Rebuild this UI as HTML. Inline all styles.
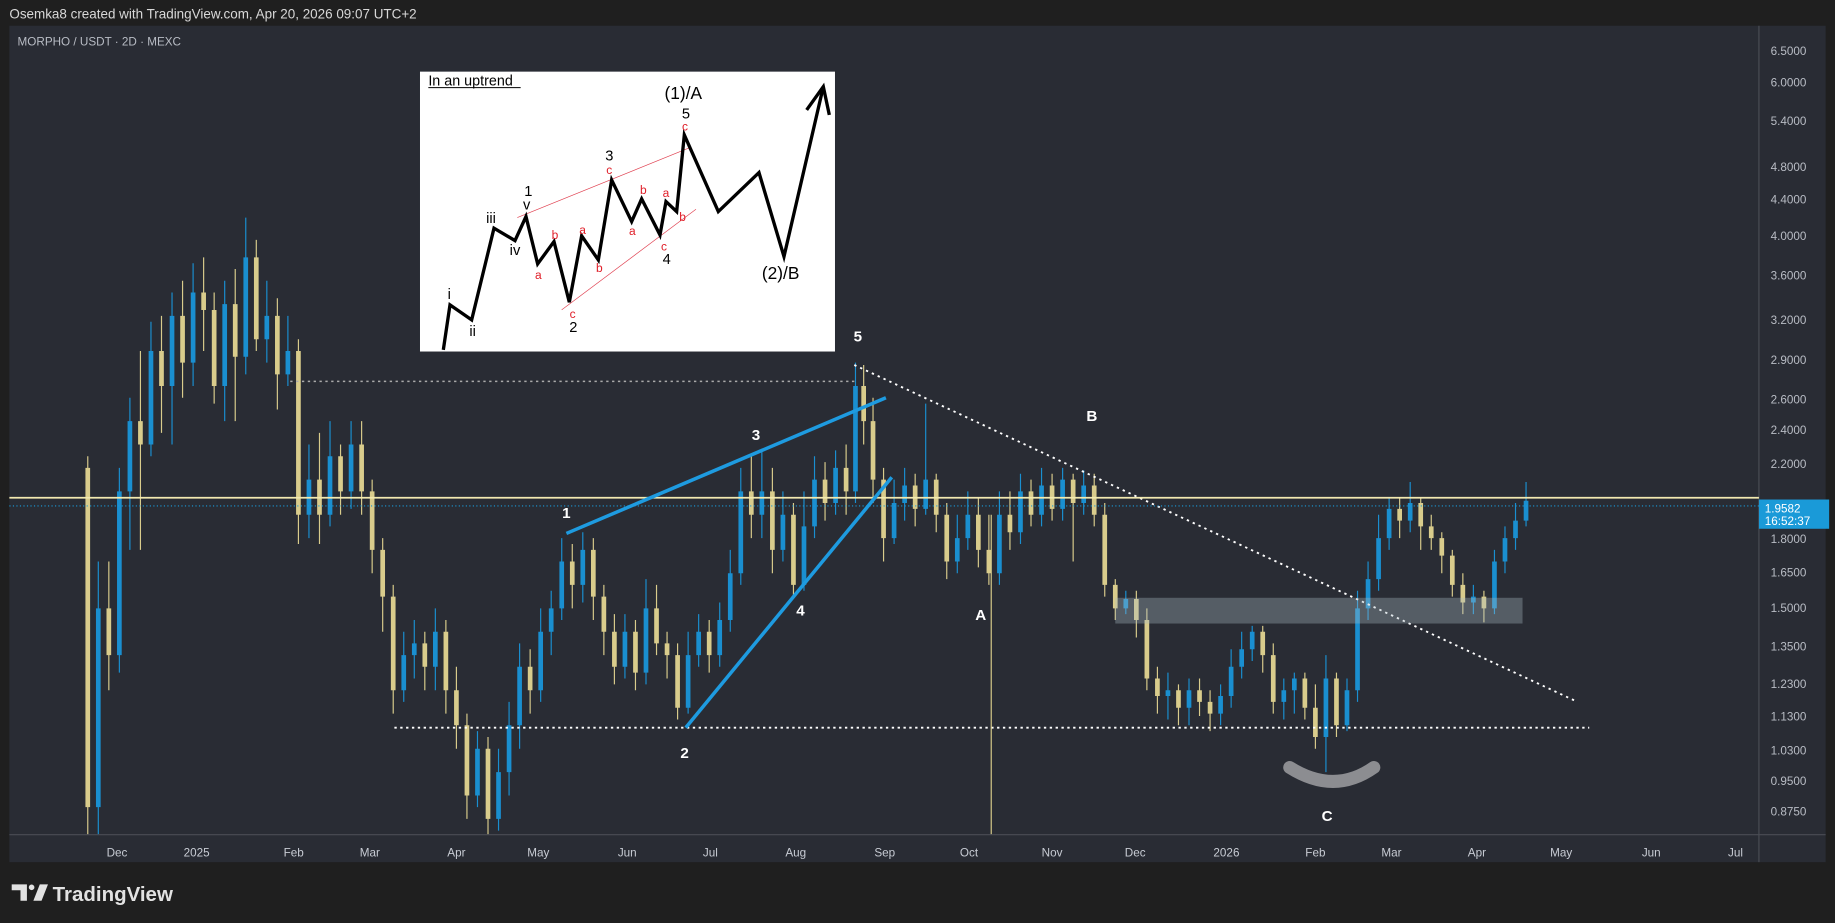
<!DOCTYPE html>
<html><head><meta charset="utf-8">
<style>
html,body{margin:0;padding:0;background:#1f1f1f;overflow:hidden}
svg{display:block}
text{font-family:"Liberation Sans","DejaVu Sans",sans-serif}
</style></head>
<body>
<svg width="1835" height="923" viewBox="0 0 1568 789" preserveAspectRatio="none" xmlns="http://www.w3.org/2000/svg">
<rect x="0" y="0" width="1568" height="789" fill="#1f1f1f"/>
<text x="8" y="16" fill="#d8d8d8" font-size="11.5">Osemka8 created with TradingView.com, Apr 20, 2026 09:07 UTC+2</text>
<rect x="8" y="22" width="1552" height="715" fill="#292c34"/>
<line x1="1503" y1="22" x2="1503" y2="737" stroke="#4a4d55" stroke-width="1"/>
<line x1="8" y1="713.5" x2="1560" y2="713.5" stroke="#4a4d55" stroke-width="1"/>
<text x="15" y="39" fill="#b8bcc4" font-size="10">MORPHO / USDT · 2D · MEXC</text>
<g fill="#b8bcc4" font-size="10" font-family="DejaVu Sans Mono, monospace">
<text x="1513" y="47">6.5000</text><text x="1513" y="74">6.0000</text><text x="1513" y="107">5.4000</text>
<text x="1513" y="146">4.8000</text><text x="1513" y="174">4.4000</text><text x="1513" y="205">4.0000</text>
<text x="1513" y="239">3.6000</text><text x="1513" y="277">3.2000</text><text x="1513" y="311">2.9000</text>
<text x="1513" y="345">2.6000</text><text x="1513" y="371">2.4000</text><text x="1513" y="400">2.2000</text>
<text x="1513" y="464">1.8000</text><text x="1513" y="493">1.6500</text><text x="1513" y="523">1.5000</text>
<text x="1513" y="556">1.3500</text><text x="1513" y="588">1.2300</text><text x="1513" y="616">1.1300</text>
<text x="1513" y="645">1.0300</text><text x="1513" y="671">0.9500</text><text x="1513" y="697">0.8750</text>
</g>
<g fill="#c8ccd4" font-size="10" text-anchor="middle">
<text x="100" y="732">Dec</text><text x="168" y="732">2025</text><text x="251" y="732">Feb</text><text x="316" y="732">Mar</text>
<text x="390" y="732">Apr</text><text x="460" y="732">May</text><text x="536" y="732">Jun</text><text x="607" y="732">Jul</text>
<text x="680" y="732">Aug</text><text x="756" y="732">Sep</text><text x="828" y="732">Oct</text><text x="899" y="732">Nov</text>
<text x="970" y="732">Dec</text><text x="1048" y="732">2026</text><text x="1124" y="732">Feb</text><text x="1189" y="732">Mar</text>
<text x="1262" y="732">Apr</text><text x="1334" y="732">May</text><text x="1411" y="732">Jun</text><text x="1483" y="732">Jul</text>
</g>
<!-- yellow candles -->
<path stroke="#d9cc8c" stroke-width="1" fill="none" d="M75 390V713M93 480V590M120 300V470M138 270V370M156 240V340M174 220V300M183 250V345M201 230V360M219 205V300M237 255V350M255 290V465M273 370V465M291 380V440M309 360V440M318 410V490M327 460V540M336 500V610M363 540V590M381 530V610M390 570V640M399 610V700M417 630V713M453 555V610M489 465V520M507 460V530M516 500V560M525 525V585M543 530V590M561 500V560M570 540V580M579 550V615M606 530V575M642 390V460M660 400V490M678 430V510M705 395V445M723 380V440M738 312V380M746 340V430M755 400V480M782 405V450M800 405V455M809 430V495M836 425V485M845 440V500M863 420V470M881 410V450M899 405V445M917 405V480M935 405V450M944 430V510M953 495V530M971 505V545M980 520V590M989 570V610M1007 585V620M1025 580V612M1034 590V625M1079 535V575M1088 550V610M1115 575V615M1124 585V640M1142 575V630M1196 425V460M1214 425V470M1223 440V470M1232 455V490M1241 470V510M1250 490V525M1268 505V532"/>
<path fill="#d9cc8c" d="M73 400h4V690h-4zM91 520h4V560h-4zM118 360h4V380h-4zM136 300h4V330h-4zM154 270h4V310h-4zM172 250h4V265h-4zM181 265h4V330h-4zM199 260h4V305h-4zM217 220h4V290h-4zM235 270h4V320h-4zM253 300h4V440h-4zM271 410h4V440h-4zM289 390h4V420h-4zM307 380h4V420h-4zM316 420h4V470h-4zM325 470h4V510h-4zM334 510h4V590h-4zM361 550h4V570h-4zM379 540h4V590h-4zM388 590h4V620h-4zM397 620h4V680h-4zM415 640h4V700h-4zM451 570h4V590h-4zM487 480h4V500h-4zM505 470h4V510h-4zM514 510h4V540h-4zM523 540h4V570h-4zM541 540h4V575h-4zM559 520h4V550h-4zM568 550h4V560h-4zM577 560h4V605h-4zM604 540h4V560h-4zM640 420h4V440h-4zM658 420h4V470h-4zM676 440h4V500h-4zM703 410h4V430h-4zM721 400h4V420h-4zM736 330h4V360h-4zM744 360h4V410h-4zM753 410h4V460h-4zM780 415h4V435h-4zM798 410h4V440h-4zM807 440h4V480h-4zM834 440h4V470h-4zM843 470h4V490h-4zM861 440h4V455h-4zM879 420h4V440h-4zM897 415h4V435h-4zM915 410h4V430h-4zM933 415h4V440h-4zM942 440h4V500h-4zM951 500h4V520h-4zM969 512h4V530h-4zM978 530h4V580h-4zM987 580h4V595h-4zM1005 590h4V605h-4zM1023 590h4V600h-4zM1032 600h4V610h-4zM1077 540h4V560h-4zM1086 560h4V600h-4zM1113 580h4V605h-4zM1122 605h4V630h-4zM1140 580h4V620h-4zM1194 435h4V445h-4zM1212 430h4V450h-4zM1221 450h4V460h-4zM1230 460h4V475h-4zM1239 475h4V500h-4zM1248 500h4V515h-4zM1266 510h4V520h-4z"/>
<!-- blue candles -->
<path stroke="#1a8fd0" stroke-width="1" fill="none" d="M84 480V713M102 400V575M111 340V470M129 275V390M147 250V380M165 225V330M192 240V360M210 186V320M228 240V310M246 270V330M264 380V460M282 360V450M300 360V435M345 540V600M354 530V580M372 520V590M408 625V690M426 640V710M435 600V680M444 550V640M462 520V600M471 505V560M480 460V530M498 455V515M534 525V580M552 495V585M588 540V610M597 525V570M615 515V570M624 470V540M633 400V500M651 385V460M669 420V480M687 420V505M696 390V460M714 385V440M731 310V430M764 410V465M773 400V445M791 345V440M818 440V490M827 420V470M854 420V500M872 405V465M890 400V450M908 400V445M926 402V440M962 505V525M998 575V615M1016 580V620M1043 585V620M1052 555V605M1061 540V580M1070 535V565M1097 580V615M1106 575V610M1133 560V660M1151 580V625M1160 505V600M1169 480V530M1178 440V505M1187 425V470M1205 412V455M1259 500V525M1277 470V525M1286 450V490M1295 430V470M1304 412V450"/>
<path fill="#1a8fd0" d="M82 520h4V690h-4zM100 420h4V560h-4zM109 360h4V420h-4zM127 300h4V380h-4zM145 270h4V330h-4zM163 250h4V310h-4zM190 260h4V330h-4zM208 220h4V305h-4zM226 270h4V290h-4zM244 300h4V320h-4zM262 410h4V440h-4zM280 390h4V440h-4zM298 380h4V420h-4zM343 560h4V590h-4zM352 550h4V560h-4zM370 540h4V570h-4zM406 640h4V680h-4zM424 660h4V700h-4zM433 620h4V660h-4zM442 570h4V620h-4zM460 540h4V590h-4zM469 520h4V540h-4zM478 480h4V520h-4zM496 470h4V500h-4zM532 540h4V570h-4zM550 520h4V575h-4zM586 560h4V605h-4zM595 540h4V560h-4zM613 530h4V560h-4zM622 490h4V530h-4zM631 420h4V490h-4zM649 420h4V440h-4zM667 440h4V470h-4zM685 450h4V500h-4zM694 410h4V450h-4zM712 400h4V430h-4zM729 330h4V420h-4zM762 430h4V460h-4zM771 415h4V430h-4zM789 410h4V435h-4zM816 460h4V480h-4zM825 440h4V460h-4zM852 440h4V490h-4zM870 420h4V455h-4zM888 415h4V440h-4zM906 410h4V435h-4zM924 415h4V430h-4zM960 512h4V520h-4zM996 590h4V595h-4zM1014 590h4V605h-4zM1041 595h4V610h-4zM1050 570h4V595h-4zM1059 555h4V570h-4zM1068 540h4V555h-4zM1095 590h4V600h-4zM1104 580h4V590h-4zM1131 580h4V630h-4zM1149 590h4V620h-4zM1158 520h4V590h-4zM1167 495h4V520h-4zM1176 460h4V495h-4zM1185 435h4V460h-4zM1203 430h4V445h-4zM1257 510h4V515h-4zM1275 480h4V520h-4zM1284 460h4V480h-4zM1293 445h4V460h-4zM1302 428h4V445h-4z"/>
<!-- annotations -->
<line x1="248" y1="326" x2="730" y2="326" stroke="#aaa" stroke-width="1.2" stroke-dasharray="2,3"/>
<line x1="337" y1="622" x2="1358" y2="622" stroke="#fff" stroke-width="1.6" stroke-dasharray="2,3"/>
<line x1="730" y1="312" x2="1348" y2="600" stroke="#fff" stroke-width="1.6" stroke-dasharray="2,3.5"/>
<line x1="8" y1="425.5" x2="1503" y2="425.5" stroke="#f2e9b0" stroke-width="1.5"/>
<line x1="8" y1="432.5" x2="1503" y2="432.5" stroke="#1a9ad8" stroke-width="1" stroke-dasharray="1,2"/>
<line x1="847" y1="440" x2="847" y2="713" stroke="#d8cc8a" stroke-width="1"/>
<line x1="484" y1="456" x2="757" y2="340" stroke="#1e9be0" stroke-width="3"/>
<line x1="586" y1="622" x2="762" y2="408" stroke="#1e9be0" stroke-width="3"/>
<rect x="953" y="511" width="348" height="22" fill="rgba(170,185,195,0.35)"/>
<path d="M1102 656 Q1140 680 1174 656" fill="none" stroke="#8c8d91" stroke-width="11" stroke-linecap="round"/>
<g fill="#fff" font-size="13" font-weight="bold" text-anchor="middle">
<text x="733" y="292">5</text><text x="646" y="376">3</text><text x="484" y="443">1</text>
<text x="684" y="526">4</text><text x="585" y="648">2</text><text x="838" y="530">A</text>
<text x="933" y="360">B</text><text x="1134" y="702">C</text>
</g>
<rect x="1503" y="427" width="60" height="25" fill="#1a9ad8"/>
<text x="1508" y="438" fill="#fff" font-size="10" font-family="DejaVu Sans Mono, monospace">1.9582</text>
<text x="1508" y="449" fill="#fff" font-size="10" font-family="DejaVu Sans Mono, monospace">16:52:37</text>
<!-- inset -->
<g transform="scale(0.85448) translate(410,65) scale(0.33333)">
<rect x="30" y="20" width="1245" height="840" fill="#fff"/>
<text x="55" y="62" font-size="43" fill="#000">In an uptrend</text>
<line x1="55" y1="68" x2="332" y2="68" stroke="#000" stroke-width="3"/>
<line x1="322" y1="458" x2="840" y2="248" stroke="#e04050" stroke-width="2"/>
<line x1="455" y1="735" x2="858" y2="433" stroke="#e04050" stroke-width="2"/>
<polyline fill="none" stroke="#000" stroke-width="10" stroke-linejoin="miter" points="100,855 120,720 185,765 252,490 315,527 348,455 383,597 432,530 478,712 515,513 565,585 605,345 665,470 695,402 750,510 768,410 800,440 823,210 925,440 1047,323 1122,575 1240,65"/>
<polyline fill="none" stroke="#000" stroke-width="10" points="1190,135 1240,65 1258,150"/>
<g font-size="44" fill="#000" text-anchor="middle">
<text x="820" y="102" font-size="52">(1)/A</text>
<text x="828" y="160">5</text><text x="598" y="287">3</text><text x="355" y="394">1</text>
<text x="350" y="434">v</text><text x="243" y="474">iii</text><text x="315" y="570">iv</text>
<text x="118" y="702">i</text><text x="188" y="814">ii</text><text x="490" y="802">2</text>
<text x="770" y="597">4</text><text x="1112" y="642" font-size="52">(2)/B</text>
</g>
<g font-size="36" fill="#e0202a" text-anchor="middle">
<text x="825" y="197">c</text><text x="598" y="327">c</text><text x="385" y="642">a</text>
<text x="435" y="522">b</text><text x="518" y="507">a</text><text x="568" y="622">b</text>
<text x="667" y="510">a</text><text x="700" y="387">b</text><text x="768" y="397">a</text>
<text x="818" y="469">b</text><text x="762" y="557">c</text><text x="488" y="759">c</text>
</g>
</g>
<!-- footer logo -->
<g fill="#e2e2e2">
<path d="M10 756 H23 V770 H17.5 V761 H10 Z"/>
<circle cx="27" cy="758.5" r="2.4"/>
<path d="M28.5 770 L34 756 H41 L35.5 770 Z"/>
</g>
<text x="45" y="770" fill="#e2e2e2" font-size="17.5" font-weight="bold">TradingView</text>
</svg>
</body></html>
